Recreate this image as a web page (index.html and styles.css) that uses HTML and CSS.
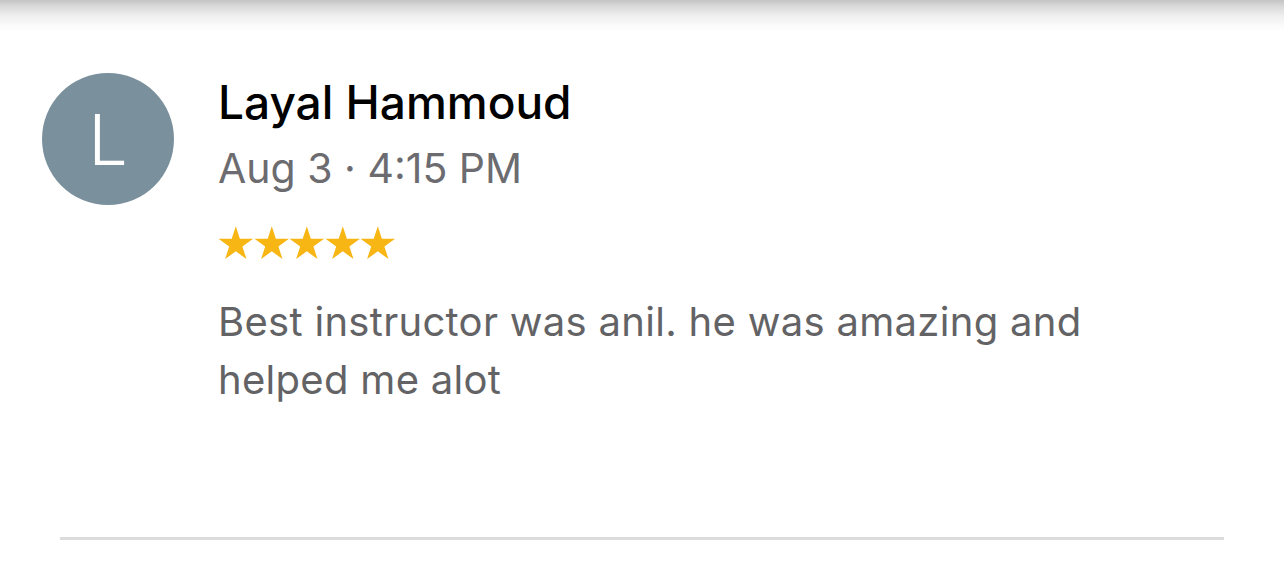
FILE: index.html
```html
<!DOCTYPE html>
<html>
<head>
<meta charset="utf-8">
<link rel="stylesheet" href="styles.css">
</head>
<body>
<div class="topshadow"></div>
<div class="review">
  <div class="avatar">L</div>
  <div class="content">
    <div class="name">Layal Hammoud</div>
    <div class="date">Aug 3 · 4:15 PM</div>
    <div class="stars">
      <svg class="star" viewBox="0 0 36 34"><polygon points="18,0 22.13,12.71 35.5,12.71 24.69,20.57 28.82,33.29 18,25.43 7.18,33.29 11.31,20.57 0.5,12.71 13.87,12.71"/></svg>
      <svg class="star" viewBox="0 0 36 34"><polygon points="18,0 22.13,12.71 35.5,12.71 24.69,20.57 28.82,33.29 18,25.43 7.18,33.29 11.31,20.57 0.5,12.71 13.87,12.71"/></svg>
      <svg class="star" viewBox="0 0 36 34"><polygon points="18,0 22.13,12.71 35.5,12.71 24.69,20.57 28.82,33.29 18,25.43 7.18,33.29 11.31,20.57 0.5,12.71 13.87,12.71"/></svg>
      <svg class="star" viewBox="0 0 36 34"><polygon points="18,0 22.13,12.71 35.5,12.71 24.69,20.57 28.82,33.29 18,25.43 7.18,33.29 11.31,20.57 0.5,12.71 13.87,12.71"/></svg>
      <svg class="star" viewBox="0 0 36 34"><polygon points="18,0 22.13,12.71 35.5,12.71 24.69,20.57 28.82,33.29 18,25.43 7.18,33.29 11.31,20.57 0.5,12.71 13.87,12.71"/></svg>
    </div>
    <div class="text">Best instructor was anil. he was amazing and<br>helped me alot</div>
  </div>
</div>
<div class="divider"></div>
</body>
</html>
```
FILE: styles.css
```css
html, body {
  margin: 0;
  padding: 0;
  background: #ffffff;
  font-family: "Inter", "Liberation Sans", Arial, sans-serif;
}
body {
  width: 1284px;
  height: 568px;
  overflow: hidden;
}
.topshadow {
  height: 32px;
  background: linear-gradient(to bottom, #c4c4c4 0px, #d8d8d8 6px, #efefef 16px, #fbfbfb 26px, #ffffff 32px);
}
.review {
  display: flex;
  align-items: flex-start;
  padding-left: 42px;
  padding-top: 38px;
  gap: 44px;
  height: 505px;
  box-sizing: border-box;
}
.avatar {
  width: 132px;
  height: 132px;
  margin-top: 3px;
  border-radius: 50%;
  background: #7b909d;
  color: #ffffff;
  font-size: 70px;
  font-weight: 300;
  display: flex;
  align-items: center;
  justify-content: center;
  flex-shrink: 0;
}
.content {
  display: flex;
  flex-direction: column;
}
.name {
  font-size: 46px;
  font-weight: 500;
  line-height: 64px;
  color: #000000;
}
.date {
  margin-top: 1px;
  font-size: 41px;
  line-height: 66px;
  color: #6c6c70;
}
.stars {
  display: flex;
  margin-top: 25px;
  height: 34px;
}
.star {
  width: 35.6px;
  height: 34px;
  fill: #f7b614;
}
.text {
  margin-top: 33px;
  font-size: 40px;
  letter-spacing: 0.3px;
  line-height: 58px;
  color: #636366;
}
.divider {
  margin-left: 60px;
  width: 1164px;
  height: 3px;
  background: #dcdcdc;
}
```
